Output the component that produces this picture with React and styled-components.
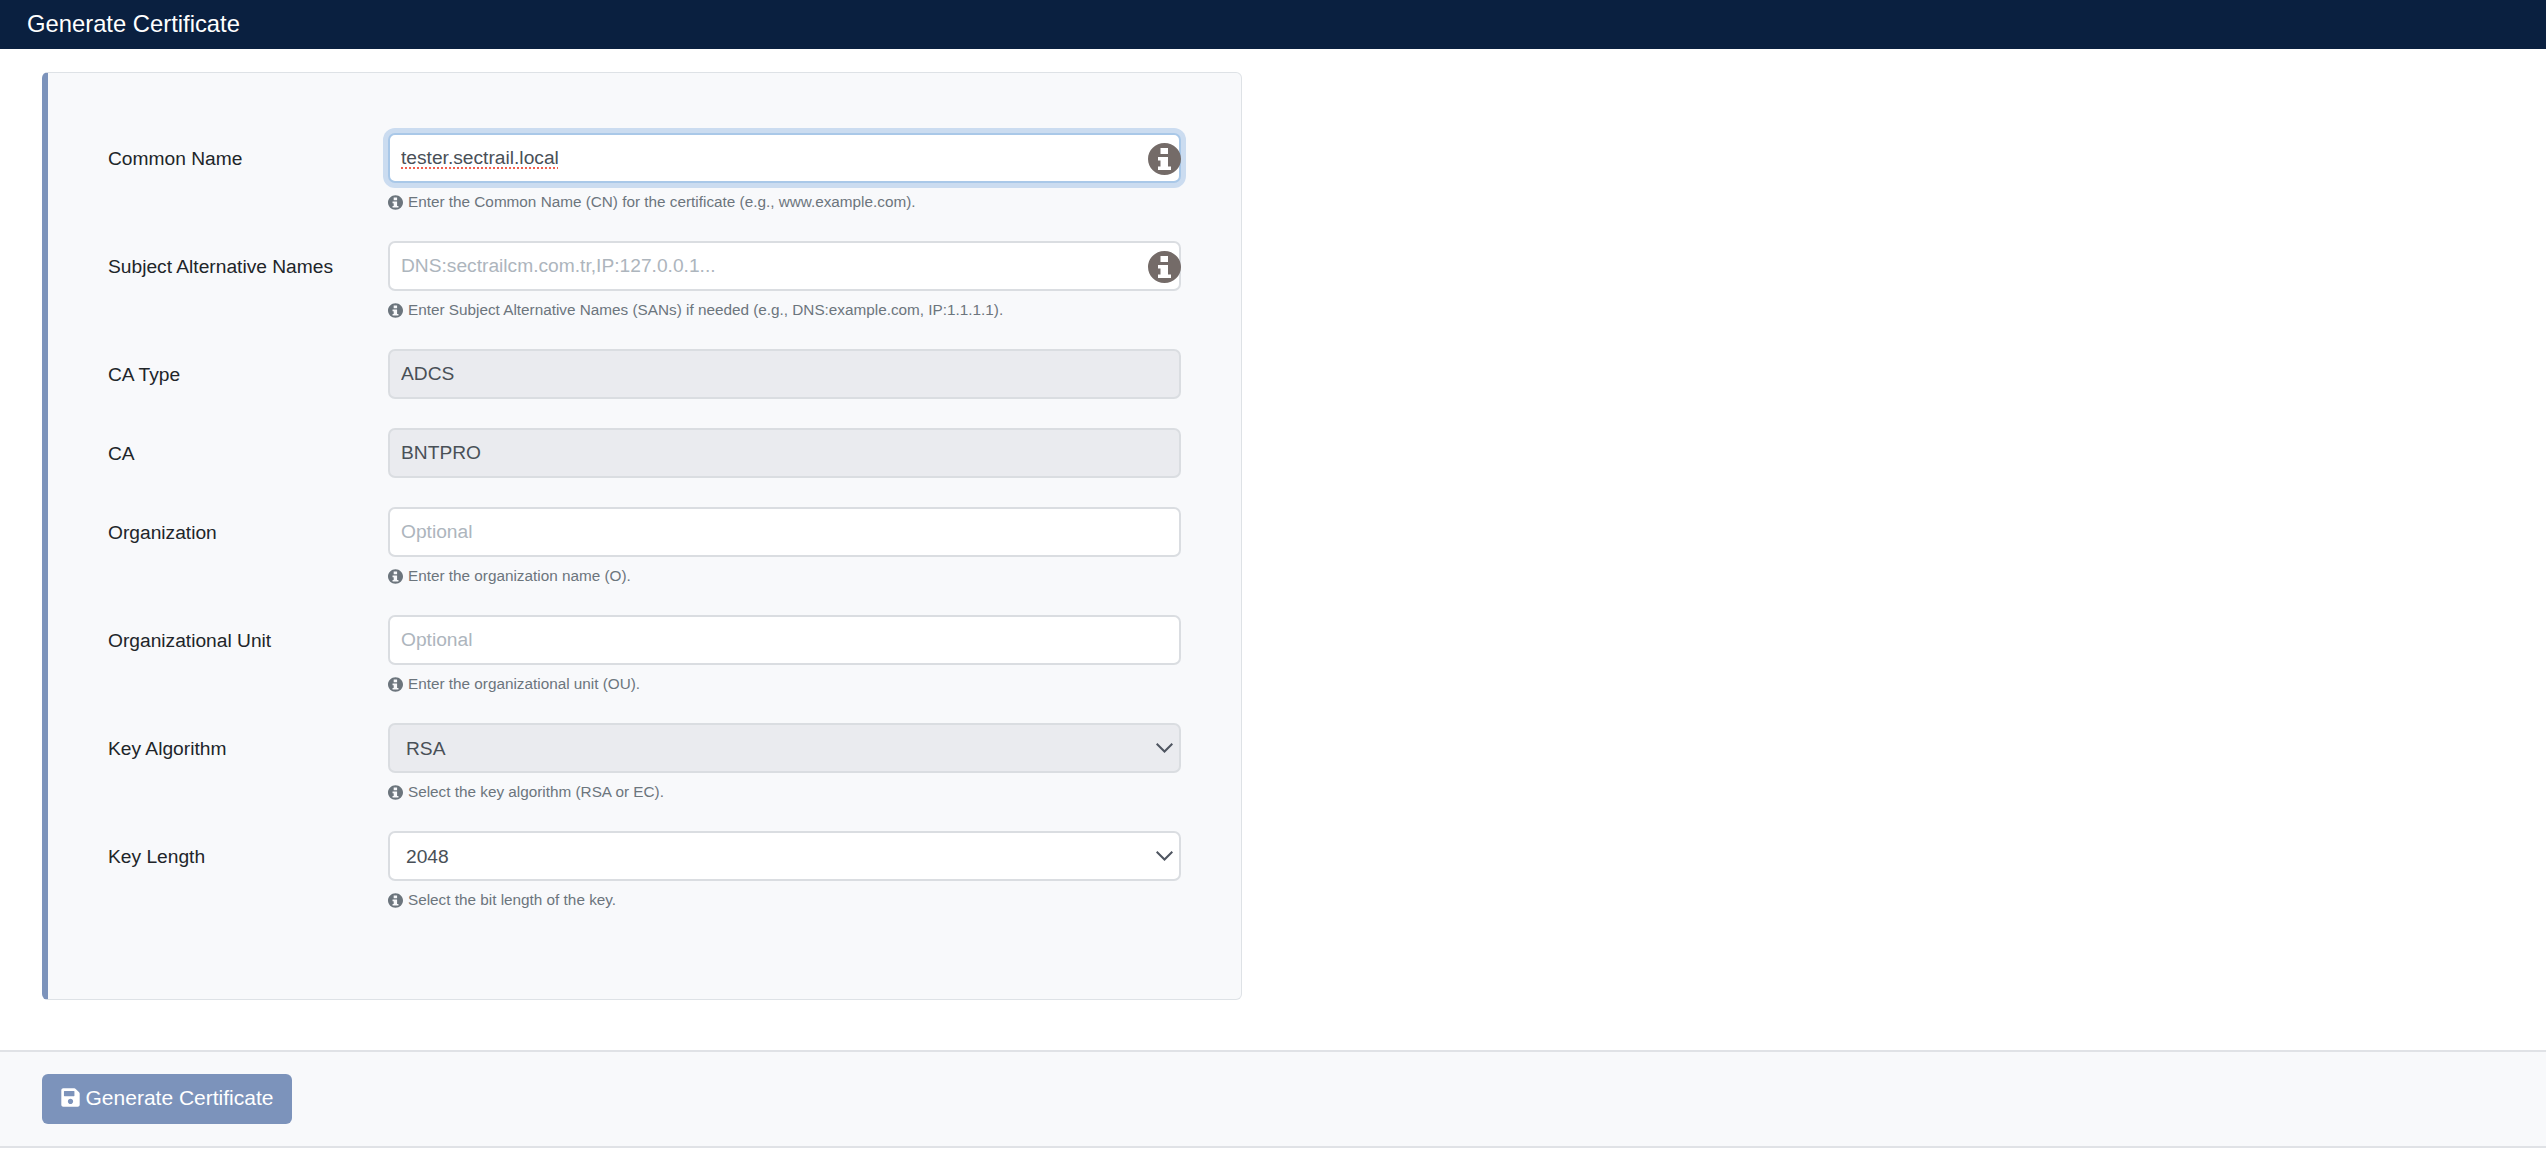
import React from "react";
import styled, { createGlobalStyle, css } from "styled-components";
import { FaSave } from "react-icons/fa";

const GlobalStyle = createGlobalStyle`
  html, body {
    margin: 0;
    padding: 0;
    background: #fff;
    font-family: "Liberation Sans", Arial, sans-serif;
  }
  * {
    box-sizing: border-box;
  }
`;

const Page = styled.div`
  display: flex;
  flex-direction: column;
  width: 100%;
`;

const Header = styled.header`
  height: 49px;
  background: #0a2040;
  color: #fff;
  font-size: 23.8px;
  line-height: 48px;
  padding-left: 27px;
`;

const Content = styled.main`
  padding: 23px 42px 50px;
`;

const Card = styled.section`
  width: 1200px;
  height: 928px;
  padding: 60px 60px 0 60px;
  background: #f8f9fb;
  border: 1px solid #dee2e6;
  border-left: 6px solid #7c93bb;
  border-radius: 6px;
`;

const Group = styled.div`
  margin-bottom: 29px;
`;

const Row = styled.div`
  display: grid;
  grid-template-columns: 280px 793px;
  height: 50px;
`;

const Label = styled.label`
  font-size: 19.2px;
  line-height: 51px;
  color: #212529;
`;

const Field = styled.div`
  position: relative;
  height: 50px;
`;

const controlStyles = css`
  display: block;
  width: 100%;
  height: 50px;
  border: 2px solid #dadde1;
  border-radius: 7px;
  font-family: "Liberation Sans", Arial, sans-serif;
  font-size: 19.2px;
  color: #495057;
  background: ${(props) => (props.$muted ? "#eaebef" : "#fff")};
  outline: none;
`;

const Input = styled.input`
  ${controlStyles}
  padding: 0 11px;
  &::placeholder {
    color: #adb5bd;
    opacity: 1;
  }
  ${(props) =>
    props.$focused &&
    css`
      border-color: #a9c8e8;
      box-shadow: 0 0 0 5px #cbdcf0;
      text-decoration: underline dotted #f0604f 2px;
      text-underline-offset: 3px;
    `}
`;

const Select = styled.select`
  ${controlStyles}
  appearance: none;
  padding: 0 16px;
`;

const InfoGlyph = ({ className }) => (
  <svg className={className} viewBox="0 0 33 32">
    <path
      fill="currentColor"
      fillRule="evenodd"
      d="M16.5 0C25.6 0 33 7.2 33 16S25.6 32 16.5 32 0 24.8 0 16 7.4 0 16.5 0ZM12.5 5V11H20V5ZM10 14V17.5H12.5V23.5H10V27H23V23.5H20V14Z"
    />
  </svg>
);

const FieldInfo = styled(InfoGlyph)`
  position: absolute;
  top: 10px;
  right: 0;
  width: 33px;
  height: 32px;
  color: #746b68;
`;

const Chevron = styled.svg`
  position: absolute;
  top: 20px;
  right: 8px;
  width: 17px;
  height: 10px;
  pointer-events: none;
`;

const Help = styled.div`
  display: flex;
  align-items: center;
  gap: 5px;
  height: 29px;
  margin-left: 280px;
  padding-top: 9px;
  font-size: 15.3px;
  color: #6c757d;
`;

const HelpInfo = styled(InfoGlyph)`
  width: 15px;
  height: 15px;
  flex: none;
`;

const Footer = styled.footer`
  height: 98px;
  padding: 22px 42px;
  background: #f8f9fb;
  border-top: 2px solid #e0e2e6;
  border-bottom: 2px solid #e0e2e6;
`;

const Button = styled.button`
  display: flex;
  align-items: center;
  justify-content: center;
  gap: 6px;
  width: 250px;
  height: 50px;
  padding: 0 0 3px;
  border: 0;
  border-radius: 6px;
  background: #7c93bb;
  color: #fff;
  font-family: "Liberation Sans", Arial, sans-serif;
  font-size: 21px;
  svg {
    width: 19px;
    height: 21px;
  }
`;

const fields = [
  { label: "Common Name", kind: "input", value: "tester.sectrail.local", focused: true, info: true, help: "Enter the Common Name (CN) for the certificate (e.g., www.example.com)." },
  { label: "Subject Alternative Names", kind: "input", placeholder: "DNS:sectrailcm.com.tr,IP:127.0.0.1...", info: true, help: "Enter Subject Alternative Names (SANs) if needed (e.g., DNS:example.com, IP:1.1.1.1)." },
  { label: "CA Type", kind: "input", value: "ADCS", muted: true },
  { label: "CA", kind: "input", value: "BNTPRO", muted: true },
  { label: "Organization", kind: "input", placeholder: "Optional", help: "Enter the organization name (O)." },
  { label: "Organizational Unit", kind: "input", placeholder: "Optional", help: "Enter the organizational unit (OU)." },
  { label: "Key Algorithm", kind: "select", value: "RSA", muted: true, help: "Select the key algorithm (RSA or EC)." },
  { label: "Key Length", kind: "select", value: "2048", help: "Select the bit length of the key." },
];

const App = () => {
  return (
    <Page>
      <GlobalStyle />
      <Header>Generate Certificate</Header>
      <Content>
        <Card>
          {fields.map((item) => (
            <Group key={item.label}>
              <Row>
                <Label>{item.label}</Label>
                <Field>
                  {item.kind === "input" ? (
                    <Input
                      readOnly
                      spellCheck={false}
                      value={item.value || ""}
                      placeholder={item.placeholder}
                      $muted={item.muted}
                      $focused={item.focused}
                    />
                  ) : (
                    <>
                      <Select value={item.value} onChange={() => {}} $muted={item.muted}>
                        <option>{item.value}</option>
                      </Select>
                      <Chevron viewBox="0 0 17 10" fill="none" stroke="#4f5560" strokeWidth="2">
                        <path d="M0.7 0.7 L8.5 8.5 L16.3 0.7" />
                      </Chevron>
                    </>
                  )}
                  {item.info && <FieldInfo />}
                </Field>
              </Row>
              {item.help && (
                <Help>
                  <HelpInfo />
                  {item.help}
                </Help>
              )}
            </Group>
          ))}
        </Card>
      </Content>
      <Footer>
        <Button>
          <FaSave />
          Generate Certificate
        </Button>
      </Footer>
    </Page>
  );
};

export default App;
